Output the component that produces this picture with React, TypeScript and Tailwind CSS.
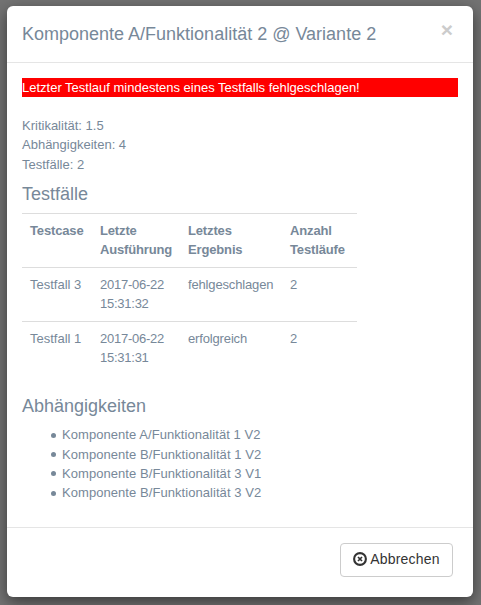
const testCases = [
  { name: "Testfall 3", date: "2017-06-22", time: "15:31:32", result: "fehlgeschlagen", runs: 2 },
  { name: "Testfall 1", date: "2017-06-22", time: "15:31:31", result: "erfolgreich", runs: 2 },
]

const dependencies = [
  "Komponente A/Funktionalität 1 V2",
  "Komponente B/Funktionalität 1 V2",
  "Komponente B/Funktionalität 3 V1",
  "Komponente B/Funktionalität 3 V2",
]

export default function App() {
  return (
    <div className="h-[605px] w-[481px] overflow-hidden bg-[#737373] px-[7px] pt-[6px] font-['Liberation_Sans',Arial,sans-serif] text-[13px] leading-[19.33px] text-[#778899]">
      <div className="h-[591px] w-[466px] rounded-[6px] bg-white shadow-[0_5px_15px_rgba(0,0,0,0.5)]">
        <div className="relative h-[57px] border-b border-[#e5e5e5] px-[15px] pt-[15px]">
          <h4 className="text-[18px] leading-[26px]">Komponente A/Funktionalität 2 @ Variante 2</h4>
          <span className="absolute right-[20px] top-[11px] text-[21px] leading-[26px] font-bold text-[#cccccc]">×</span>
        </div>
        <div className="h-[464px] px-[15px] pt-[15px]">
          <div className="h-[19px] bg-[#ff0000] text-white">Letzter Testlauf mindestens eines Testfalls fehlgeschlagen!</div>
          <div className="mt-[19px]">
            <div>Kritikalität: 1.5</div>
            <div>Abhängigkeiten: 4</div>
            <div>Testfälle: 2</div>
          </div>
          <h3 className="mt-[7px] text-[18px] leading-[26px] font-medium">Testfälle</h3>
          <table className="mt-[6px] border-collapse leading-[18.57px]">
            <thead>
              <tr className="border-y border-[#dddddd] align-top font-bold tracking-[-0.15px]">
                <th className="w-[70px] py-[8px] pl-[8px] text-left">Testcase</th>
                <th className="w-[88px] py-[8px] pl-[8px] text-left">Letzte<br />Ausführung</th>
                <th className="w-[102px] py-[8px] pl-[8px] text-left">Letztes<br />Ergebnis</th>
                <th className="w-[75px] py-[8px] pl-[8px] text-left">Anzahl<br />Testläufe</th>
              </tr>
            </thead>
            <tbody>
              {testCases.map((t) => (
                <tr key={t.name} className="border-b border-[#dddddd] align-top last:border-b-0">
                  <td className="py-[8px] pl-[8px]">{t.name}</td>
                  <td className="py-[8px] pl-[8px] tracking-[-0.25px]">{t.date}<br />{t.time}</td>
                  <td className="py-[8px] pl-[8px] tracking-[-0.15px]">{t.result}</td>
                  <td className="py-[8px] pl-[8px]">{t.runs}</td>
                </tr>
              ))}
            </tbody>
          </table>
          <h3 className="mt-[18px] text-[18px] leading-[26px] font-medium">Abhängigkeiten</h3>
          <ul className="mt-[6px] pl-[29px] tracking-[0.06px]">
            {dependencies.map((d) => (
              <li key={d} className="flex items-center gap-[6px]">
                <span className="h-[5px] w-[5px] rounded-full bg-[#778899]" />
                {d}
              </li>
            ))}
          </ul>
        </div>
        <div className="flex h-[70px] justify-end border-t border-[#e5e5e5] pt-[15px] pr-[20px]">
          <button className="flex h-[34px] w-[113px] items-center justify-center gap-[3px] rounded-[4px] border border-[#cccccc] bg-white text-[14px] tracking-[0.2px] text-[#333333]">
            <svg viewBox="0 0 14 14" className="h-[14px] w-[14px] -translate-y-[1px]" fill="none" stroke="currentColor">
              <circle cx="7" cy="7" r="5.9" strokeWidth="2.1" />
              <path d="M5 5l4 4M9 5l-4 4" strokeWidth="1.7" />
            </svg>
            Abbrechen
          </button>
        </div>
      </div>
    </div>
  )
}
